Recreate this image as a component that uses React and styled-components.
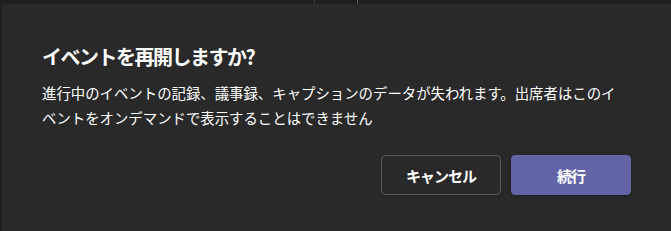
import React from "react";
import styled, { createGlobalStyle } from "styled-components";

const GlobalStyle = createGlobalStyle`
    html, body {
        margin: 0;
        padding: 0;
        background: #1f1f1f;
        overflow: hidden;
    }
    body {
        font-family: "Noto Sans CJK JP", "Noto Sans", sans-serif;
        -webkit-font-smoothing: antialiased;
    }
`

const Page = styled.div`
    width: 671px;
    height: 231px;
    display: flex;
    flex-direction: column;
    background: #1f1f1f;
`
const TopStrip = styled.div`
    height: 4px;
    flex-shrink: 0;
    display: flex;
    padding-left: 314px;
    gap: 42px;
`
const Divider = styled.span`
    width: 1px;
    height: 100%;
    background: ${props => props.$light ? "#5a5a5a" : "#3b3b3b"};
`
const Dialog = styled.section`
    flex: 1;
    margin-left: 2px;
    background: #292929;
    border-radius: 4px 0 0 0;
    padding: 39px 40px 0 40px;
    display: flex;
    flex-direction: column;
`
const Title = styled.h2`
    margin: 0;
    font-size: 20px;
    line-height: 28px;
    font-weight: 700;
    color: #ffffff;
    letter-spacing: -1.5px;
`
const Message = styled.p`
    margin: 9px 0 0 0;
    width: 578px;
    font-size: 14.4px;
    line-height: 25px;
    color: #ffffff;
`
const Actions = styled.div`
    margin-top: 25px;
    display: flex;
    justify-content: flex-end;
    gap: 10px;
`
const Button = styled.button`
    width: 120px;
    height: 40px;
    box-sizing: border-box;
    border-radius: 4px;
    font-family: inherit;
    font-size: 15px;
    font-weight: 700;
    letter-spacing: -1px;
    color: #ffffff;
    cursor: pointer;
    background: ${props => props.$primary ? "#6264a7" : "#292929"};
    border: 1px solid ${props => props.$primary ? "#6264a7" : "#5c5c5c"};
    box-shadow: 0 1px 3px rgba(0, 0, 0, 0.3);
`

const App = () => {
    return (
        <Page>
            <GlobalStyle />
            <TopStrip>
                <Divider />
                <Divider $light />
            </TopStrip>
            <Dialog>
                <Title>イベントを再開しますか?</Title>
                <Message>
                    進行中のイベントの記録、議事録、キャプションのデータが失われます。出席者はこのイベントをオンデマンドで表示することはできません
                </Message>
                <Actions>
                    <Button>キャンセル</Button>
                    <Button $primary>続行</Button>
                </Actions>
            </Dialog>
        </Page>
    )
}

export default App;
